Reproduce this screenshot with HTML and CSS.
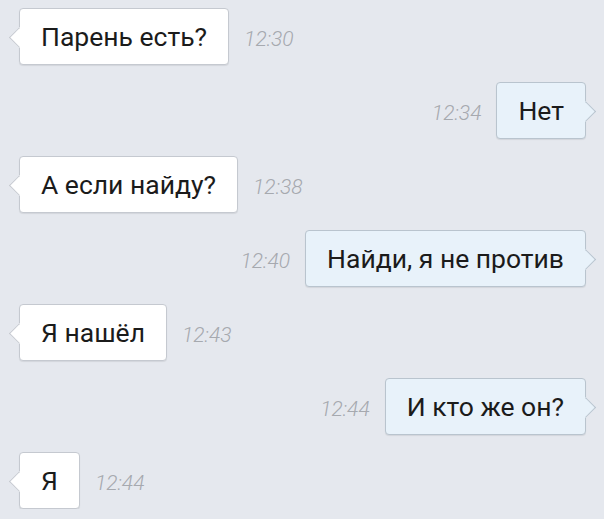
FILE: index.html
```html
<!DOCTYPE html>
<html lang="ru">
<head>
    <meta charset="UTF-8">
    <title>Чат</title>
    <link rel="stylesheet" href="styles.css">
</head>
<body>
    <div class="chat">
        <div class="row in"><div class="bubble">Парень есть?</div><span class="time">12:30</span></div>
        <div class="row out"><span class="time">12:34</span><div class="bubble">Нет</div></div>
        <div class="row in"><div class="bubble">А если найду?</div><span class="time">12:38</span></div>
        <div class="row out"><span class="time">12:40</span><div class="bubble">Найди, я не против</div></div>
        <div class="row in"><div class="bubble">Я нашёл</div><span class="time">12:43</span></div>
        <div class="row out"><span class="time">12:44</span><div class="bubble">И кто же он?</div></div>
        <div class="row in"><div class="bubble">Я</div><span class="time">12:44</span></div>
    </div>
</body>
</html>
```

FILE: styles.css
```css
body { margin: 0; background: #e5e8ee; font-family: Roboto, "Noto Sans", sans-serif; }
.chat { display: flex; flex-direction: column; gap: 17px; padding: 8px 18px 0 19px; }
.row { display: flex; align-items: baseline; gap: 15px; }
.row.out { justify-content: flex-end; }
.bubble {
    position: relative;
    height: 55px;
    line-height: 55px;
    padding: 0 21px;
    font-size: 26.5px;
    color: #1b1b1b;
    background: #fff;
    border: 1px solid #c5c9d0;
    border-radius: 4px;
    box-shadow: 0 1px 1px rgba(0, 0, 0, 0.08);
}
.out .bubble { background: #e8f2fa; border-color: #b9c4ce; }
.bubble::before {
    content: "";
    position: absolute;
    top: 21px;
    width: 13px;
    height: 13px;
    background: inherit;
    border: 1px solid #c5c9d0;
    transform: rotate(45deg);
}
.in .bubble::before { left: -8px; border-top-color: transparent; border-right-color: transparent; }
.out .bubble::before { right: -8px; border-color: #b9c4ce; border-bottom-color: transparent; border-left-color: transparent; }
.time { font-size: 21px; font-style: italic; font-weight: 300; color: #a6a9af; }
```
